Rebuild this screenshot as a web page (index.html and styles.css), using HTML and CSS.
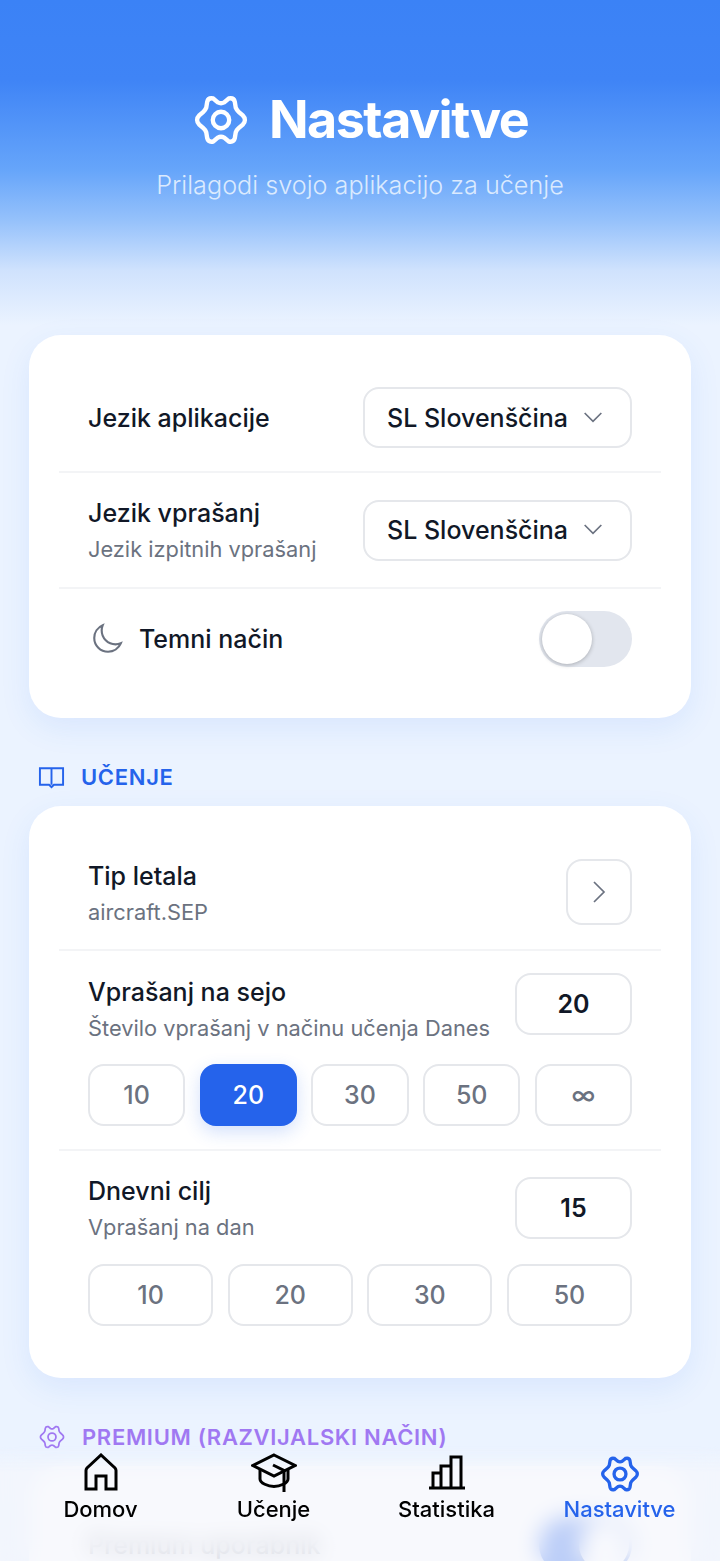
FILE: index.html
```html
<!DOCTYPE html>
<html lang="sl">
<head>
<meta charset="utf-8">
<title>Nastavitve</title>
<link rel="stylesheet" href="styles.css">
</head>
<body>
<svg class="defs" width="0" height="0" aria-hidden="true">
  <symbol id="gear" viewBox="0 0 24 24">
    <path d="M21.9 12Q21.9 13 21 13.9L19.3 15.4Q18.5 16.1 18.1 17.1L17.7 19.6Q17.3 21.3 15.2 20.9L13.3 19.3Q12 18.6 10.7 19.3L8.8 20.9Q6.7 21.3 6.3 19.6L5.9 17.1Q5.5 16.1 4.7 15.4L3 13.9Q2.1 13 2.1 12Q2.1 11 3 10.1L4.7 8.6Q5.5 7.9 5.9 6.9L6.3 4.4Q6.7 2.7 8.8 3.1L10.7 4.7Q12 5.4 13.3 4.7L15.2 3.1Q17.3 2.7 17.7 4.4L18.1 6.9Q18.5 7.9 19.3 8.6L21 10.1Q21.9 11 21.9 12Z"/>
    <circle cx="12" cy="12" r="3.4"/>
  </symbol>
</svg>
<div class="page">
  <header class="hero">
    <h1 class="hero-title">
      <svg class="icon gear-lg"><use href="#gear"/></svg>
      <span>Nastavitve</span>
    </h1>
    <p class="hero-sub">Prilagodi svojo aplikacijo za učenje</p>
  </header>

  <section class="card">
    <div class="row">
      <div class="label">Jezik aplikacije</div>
      <div class="select">SL Slovenščina
        <svg class="chev" viewBox="0 0 24 24"><path d="M2 6l10 10L22 6"/></svg>
      </div>
    </div>
    <div class="row">
      <div>
        <div class="label">Jezik vprašanj</div>
        <div class="sub">Jezik izpitnih vprašanj</div>
      </div>
      <div class="select">SL Slovenščina
        <svg class="chev" viewBox="0 0 24 24"><path d="M2 6l10 10L22 6"/></svg>
      </div>
    </div>
    <div class="row row-last">
      <div class="with-icon">
        <svg class="icon moon" viewBox="0 0 24 24"><path d="M21.752 15.002A9.718 9.718 0 0118 15.75c-5.385 0-9.75-4.365-9.75-9.75 0-1.33.266-2.597.748-3.752A9.753 9.753 0 003 11.25C3 16.635 7.365 21 12.75 21a9.753 9.753 0 009.002-5.998z"/></svg>
        <div class="label">Temni način</div>
      </div>
      <div class="toggle"><span class="knob"></span></div>
    </div>
  </section>

  <h2 class="section-head section-blue">
    <svg class="icon book" viewBox="0 0 28 24"><path d="M14 3H2V20H11.5L14 22.5L16.5 20H26V3H14V20"/></svg>
    <span>UČENJE</span>
  </h2>

  <section class="card">
    <div class="row">
      <div class="text-low">
        <div class="label">Tip letala</div>
        <div class="sub">aircraft.SEP</div>
      </div>
      <div class="square">
        <svg class="chev-right" viewBox="0 0 24 24"><path d="M7 2l10 10L7 22"/></svg>
      </div>
    </div>
    <div class="row-stack">
      <div class="row-top">
        <div class="text-nudge">
          <div class="label">Vprašanj na sejo</div>
          <div class="sub">Število vprašanj v načinu učenja Danes</div>
        </div>
        <div class="value">20</div>
      </div>
      <div class="pills">
        <div class="pill">10</div>
        <div class="pill pill-active">20</div>
        <div class="pill">30</div>
        <div class="pill">50</div>
        <div class="pill">∞</div>
      </div>
    </div>
    <div class="row-stack row-stack-last">
      <div class="row-top row-top-center">
        <div>
          <div class="label">Dnevni cilj</div>
          <div class="sub">Vprašanj na dan</div>
        </div>
        <div class="value">15</div>
      </div>
      <div class="pills pills-even">
        <div class="pill">10</div>
        <div class="pill">20</div>
        <div class="pill">30</div>
        <div class="pill">50</div>
      </div>
    </div>
  </section>

  <h2 class="section-head section-purple">
    <svg class="icon gear-sm"><use href="#gear"/></svg>
    <span>PREMIUM (RAZVIJALSKI NAČIN)</span>
  </h2>

  <section class="card">
    <div class="row row-last">
      <div class="label label-compact">Premium uporabnik</div>
      <div class="toggle toggle-on"><span class="knob"></span></div>
    </div>
  </section>
</div>

<nav class="tabbar">
  <a class="tab">
    <svg class="tab-icon" viewBox="0 0 40 40"><path d="M5 36V17.5C5 16.5 5.4 15.7 6 15L20 2L34 15C34.6 15.7 35 16.5 35 17.5V36H25V23H15V36Z"/></svg>
    <span>Domov</span>
  </a>
  <a class="tab">
    <svg class="tab-icon cap" viewBox="0 0 46 40"><path d="M23 2L44 12.5L23 23L2 12.5Z"/><path d="M9 16.5V26C9 30 17 33.5 23 33.5C29 33.5 37 30 37 26V16.5"/><path d="M22 12L33 17.5V39"/></svg>
    <span>Učenje</span>
  </a>
  <a class="tab">
    <svg class="tab-icon" viewBox="0 0 40 40"><path d="M2 35H38M6 35V20H14V35M14 35V13H24V35M24 35V4H34V35"/></svg>
    <span>Statistika</span>
  </a>
  <a class="tab tab-active">
    <svg class="tab-icon gear-nav"><use href="#gear"/></svg>
    <span>Nastavitve</span>
  </a>
</nav>
</body>
</html>
```

FILE: styles.css
```css
* { box-sizing: border-box; }
html, body {
  margin: 0;
  height: 1561px;
  overflow: hidden;
}
body {
  position: relative;
  font-family: Inter, "Noto Sans", sans-serif;
  color: #111827;
  background: #ebf3ff;
}
.defs { position: absolute; }
.page {
  padding: 0 29px;
  background: linear-gradient(180deg, #3b82f6 0, #3f84f6 80px, #66a5fa 170px, #95c1fb 220px, #cfe2fd 270px, #ebf3ff 325px) no-repeat;
  background-size: 100% 340px;
}
.hero {
  padding-top: 90px;
  height: 335px;
  text-align: center;
}
.hero-title {
  margin: 0;
  display: flex;
  justify-content: center;
  align-items: center;
  gap: 19px;
  font-size: 52px;
  line-height: 60px;
  font-weight: 700;
  color: #fff;
  letter-spacing: -1.5px;
}
.hero-sub {
  margin: 20px 0 0;
  font-size: 25.2px;
  line-height: 30px;
  font-weight: 300;
  color: #dbeafe;
}
.icon { fill: none; stroke: currentColor; }
.gear-lg { width: 58px; height: 58px; stroke-width: 1.8; }
.card {
  background: #fff;
  border-radius: 32px;
  padding: 29px 30px;
  box-shadow: 0 10px 30px rgba(59, 130, 246, 0.1);
}
.row {
  display: flex;
  justify-content: space-between;
  align-items: center;
  padding: 23px 29px;
  border-bottom: 2px solid #f3f4f6;
}
.row-last { border-bottom: 0; padding-top: 22px; padding-bottom: 22px; }
.label {
  font-size: 25px;
  line-height: 34px;
  font-weight: 450;
  color: #111827;
}
.label-compact { line-height: 28px; color: #6b7280; }
.sub {
  margin-top: 4px;
  font-size: 21.8px;
  line-height: 30px;
  color: #6b7280;
}
.text-low { position: relative; top: 1px; }
.select {
  display: flex;
  justify-content: space-between;
  align-items: center;
  width: 269px;
  height: 61px;
  padding: 0 27px 0 22px;
  border: 2px solid #e5e7eb;
  border-radius: 16px;
  background: #fff;
  font-size: 25px;
  font-weight: 450;
}
.chev, .chev-right {
  fill: none;
  stroke: #6b7280;
  stroke-width: 2;
  width: 20px;
  height: 20px;
}
.chev-right { width: 28px; height: 24px; stroke-width: 1.7; }
.with-icon { display: flex; align-items: center; gap: 15px; margin-left: 2px; }
.moon { width: 34px; height: 34px; color: #6b7280; stroke-width: 1.5; }
.toggle {
  display: flex;
  align-items: center;
  width: 93px;
  height: 56px;
  padding: 3px;
  border-radius: 28px;
  background: #e2e6ee;
}
.knob {
  width: 50px;
  height: 50px;
  border-radius: 50%;
  background: #fff;
  box-shadow: 0 1px 4px rgba(0, 0, 0, 0.25);
}
.toggle-on { background: #2563eb; justify-content: flex-end; }
.section-head {
  display: flex;
  align-items: center;
  gap: 16px;
  height: 88px;
  margin: 0;
  padding: 30px 9px 0;
  font-size: 22px;
  font-weight: 600;
  letter-spacing: 0.68px;
}
.section-blue { color: #2563eb; }
.section-purple { color: #a078f2; }
.book { width: 27px; height: 24px; stroke-width: 2; }
.gear-sm { width: 28px; height: 28px; stroke-width: 1.5; }
.square {
  display: flex;
  justify-content: center;
  align-items: center;
  width: 66px;
  height: 66px;
  border: 2px solid #e5e7eb;
  border-radius: 16px;
}
.row-stack {
  padding: 22px 29px 23px;
  border-bottom: 2px solid #f3f4f6;
}
.row-stack-last { border-bottom: 0; padding-top: 23px; }
.row-top {
  display: flex;
  justify-content: space-between;
  align-items: flex-start;
}
.row-top-center { align-items: center; }
.text-nudge { padding-top: 2px; }
.value {
  display: flex;
  justify-content: center;
  align-items: center;
  width: 117px;
  height: 62px;
  border: 2px solid #e5e7eb;
  border-radius: 16px;
  font-size: 25px;
  font-weight: 600;
  color: #111827;
}
.pills {
  display: flex;
  gap: 14.5px;
  margin-top: 21px;
}
.pills-even { margin-top: 22px; }
.pill {
  flex: 1 1 0;
  display: flex;
  justify-content: center;
  align-items: center;
  height: 62px;
  border: 2px solid #e5e7eb;
  border-radius: 16px;
  background: #fff;
  font-size: 25px;
  font-weight: 450;
  color: #6b7280;
}
.pill-active {
  background: #2563eb;
  border-color: #2563eb;
  color: #fff;
  box-shadow: 0 6px 18px rgba(37, 99, 235, 0.2);
}
.tabbar {
  position: absolute;
  left: 0;
  right: 0;
  bottom: 0;
  height: 115px;
  display: grid;
  grid-template-columns: repeat(4, 173px);
  padding: 7px 14px 0;
}
.tabbar::before {
  content: "";
  position: absolute;
  inset: 0;
  -webkit-backdrop-filter: blur(11px);
  backdrop-filter: blur(11px);
  background: rgba(245, 247, 252, 0.72);
  -webkit-mask-image: linear-gradient(180deg, transparent 0, #000 26px);
  mask-image: linear-gradient(180deg, transparent 0, #000 26px);
}
.tab {
  position: relative;
  display: flex;
  flex-direction: column;
  align-items: center;
  font-size: 22px;
  font-weight: 450;
  line-height: 28px;
  color: #000;
}
.tab-icon {
  width: 40px;
  height: 40px;
  margin-bottom: 2px;
  fill: none;
  stroke: currentColor;
  stroke-width: 3;
}
.cap { width: 46px; }
.gear-nav { width: 42px; height: 42px; margin-bottom: 0; stroke-width: 1.9; }
.tab-active { color: #2563eb; }
```
